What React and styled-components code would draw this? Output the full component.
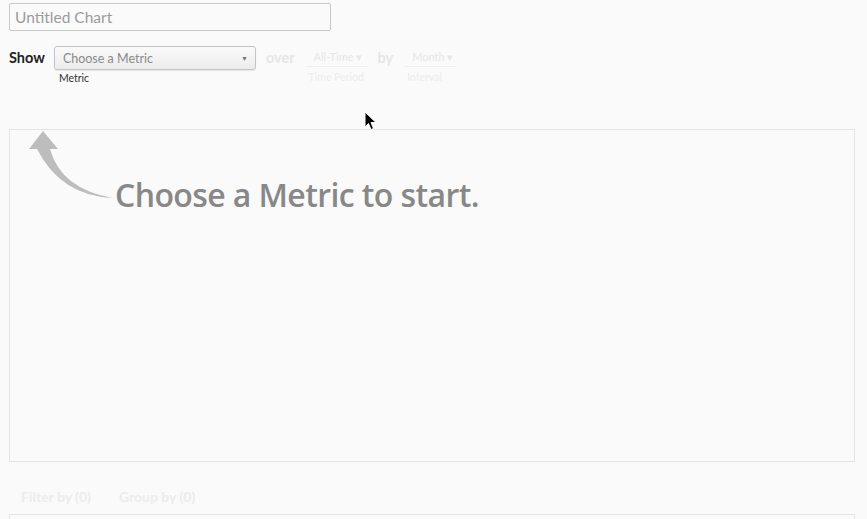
import React from 'react';
import styled, { createGlobalStyle } from 'styled-components';

const GlobalStyle = createGlobalStyle`
  html, body {
    margin: 0;
    padding: 0;
    background: #fafafa;
    font-family: 'Lato', 'Helvetica Neue', Arial, sans-serif;
  }
`;

function App() {
  return (
    <>
      <GlobalStyle />
      <Page>
        <TitleInput defaultValue="" placeholder="Untitled Chart" />
        <QueryRow>
          <Keyword>Show</Keyword>
          <Field>
            <Select>
              <span>Choose a Metric</span>
              <Caret>▼</Caret>
            </Select>
            <FieldLabel>Metric</FieldLabel>
          </Field>
          <Keyword faded>over</Keyword>
          <Field>
            <Dropdown width="62px">All-Time ▾</Dropdown>
            <FieldLabel faded>Time Period</FieldLabel>
          </Field>
          <Keyword faded>by</Keyword>
          <Field>
            <Dropdown width="52px">Month ▾</Dropdown>
            <FieldLabel faded>Interval</FieldLabel>
          </Field>
        </QueryRow>
        <ChartPanel>
          <Arrow width="100" height="80" viewBox="0 0 100 80">
            <path
              d="M16 1 L31 19 L23 19 Q34 59 86 68 Q34 66 10 19 L2 19 Z"
              fill="#bdbdbd"
            />
          </Arrow>
          <EmptyMessage>Choose a Metric to start.</EmptyMessage>
        </ChartPanel>
        <Tabs>
          <Tab>Filter by (0)</Tab>
          <Tab>Group by (0)</Tab>
        </Tabs>
        <BottomPanel />
        <Cursor width="14" height="20" viewBox="0 0 14 20">
          <path d="M1 1 L1 16 L4.5 12.5 L7 18.5 L9.5 17.5 L7 11.5 L12 11.5 Z" fill="#000" stroke="#fff" strokeWidth="1" />
        </Cursor>
      </Page>
    </>
  );
}

export default App;

const Page = styled.div`
  position: relative;
  height: 519px;
  overflow: hidden;
  padding: 3px 12px 0 9px;
  box-sizing: border-box;
`;

const TitleInput = styled.input`
  display: block;
  width: 322px;
  height: 28px;
  box-sizing: border-box;
  border: 1px solid #c8c8c8;
  border-radius: 2px;
  background: #fafafa;
  padding: 0 5px;
  font-family: 'Lato', sans-serif;
  font-size: 15.5px;
  color: #555;
  outline: none;

  &::placeholder {
    color: #9a9a9a;
  }
`;

const QueryRow = styled.div`
  display: flex;
  align-items: flex-start;
  margin-top: 15px;
  height: 83px;
`;

const Keyword = styled.span`
  font-weight: 700;
  font-size: 14.5px;
  line-height: 24px;
  color: ${(p) => (p.faded ? '#e6e6e6' : '#222')};
  margin-right: ${(p) => (p.faded ? '11px' : '9px')};
  margin-left: ${(p) => (p.faded ? '10px' : '0')};
`;

const Field = styled.div`
  display: flex;
  flex-direction: column;
`;

const Select = styled.div`
  width: 202px;
  height: 24px;
  box-sizing: border-box;
  display: flex;
  align-items: center;
  justify-content: space-between;
  padding: 0 7px 0 8px;
  border: 1px solid #c4c4c4;
  border-radius: 3px;
  background: linear-gradient(#fafafa, #ececec);
  box-shadow: 0 1px 1px rgba(0, 0, 0, 0.08);
  font-size: 12.5px;
  color: #8a8a8a;
`;

const Caret = styled.span`
  font-size: 7px;
  color: #777;
`;

const FieldLabel = styled.span`
  font-size: 10.5px;
  color: ${(p) => (p.faded ? '#ececec' : '#333')};
  padding-left: ${(p) => (p.faded ? '3px' : '5px')};
  margin-top: ${(p) => (p.faded ? '4px' : '2px')};
`;

const Dropdown = styled.div`
  box-sizing: border-box;
  height: 21px;
  line-height: 21px;
  width: ${(p) => p.width};
  padding-left: 8px;
  font-size: 11px;
  color: #e6e6e6;
  border-bottom: 1px solid #eeeeee;
`;

const ChartPanel = styled.div`
  position: relative;
  height: 333px;
  box-sizing: border-box;
  border: 1px solid #e4e4e4;
  background: #fafafa;
  padding: 45px 0 0 105px;
`;

const Arrow = styled.svg`
  position: absolute;
  left: 17px;
  top: 0;
`;

const EmptyMessage = styled.h2`
  margin: 0;
  font-family: 'Open Sans', sans-serif;
  font-size: 32px;
  line-height: 40px;
  font-weight: 600;
  color: #888;
  letter-spacing: -0.6px;
`;

const Tabs = styled.div`
  display: flex;
  gap: 28px;
  padding: 26px 0 0 12px;
  height: 26px;
`;

const Tab = styled.span`
  font-size: 14px;
  font-weight: 700;
  color: #ececec;
`;

const BottomPanel = styled.div`
  height: 20px;
  border: 1px solid #e6e6e6;
  border-bottom: none;
`;

const Cursor = styled.svg`
  position: absolute;
  left: 364px;
  top: 111px;
`;
